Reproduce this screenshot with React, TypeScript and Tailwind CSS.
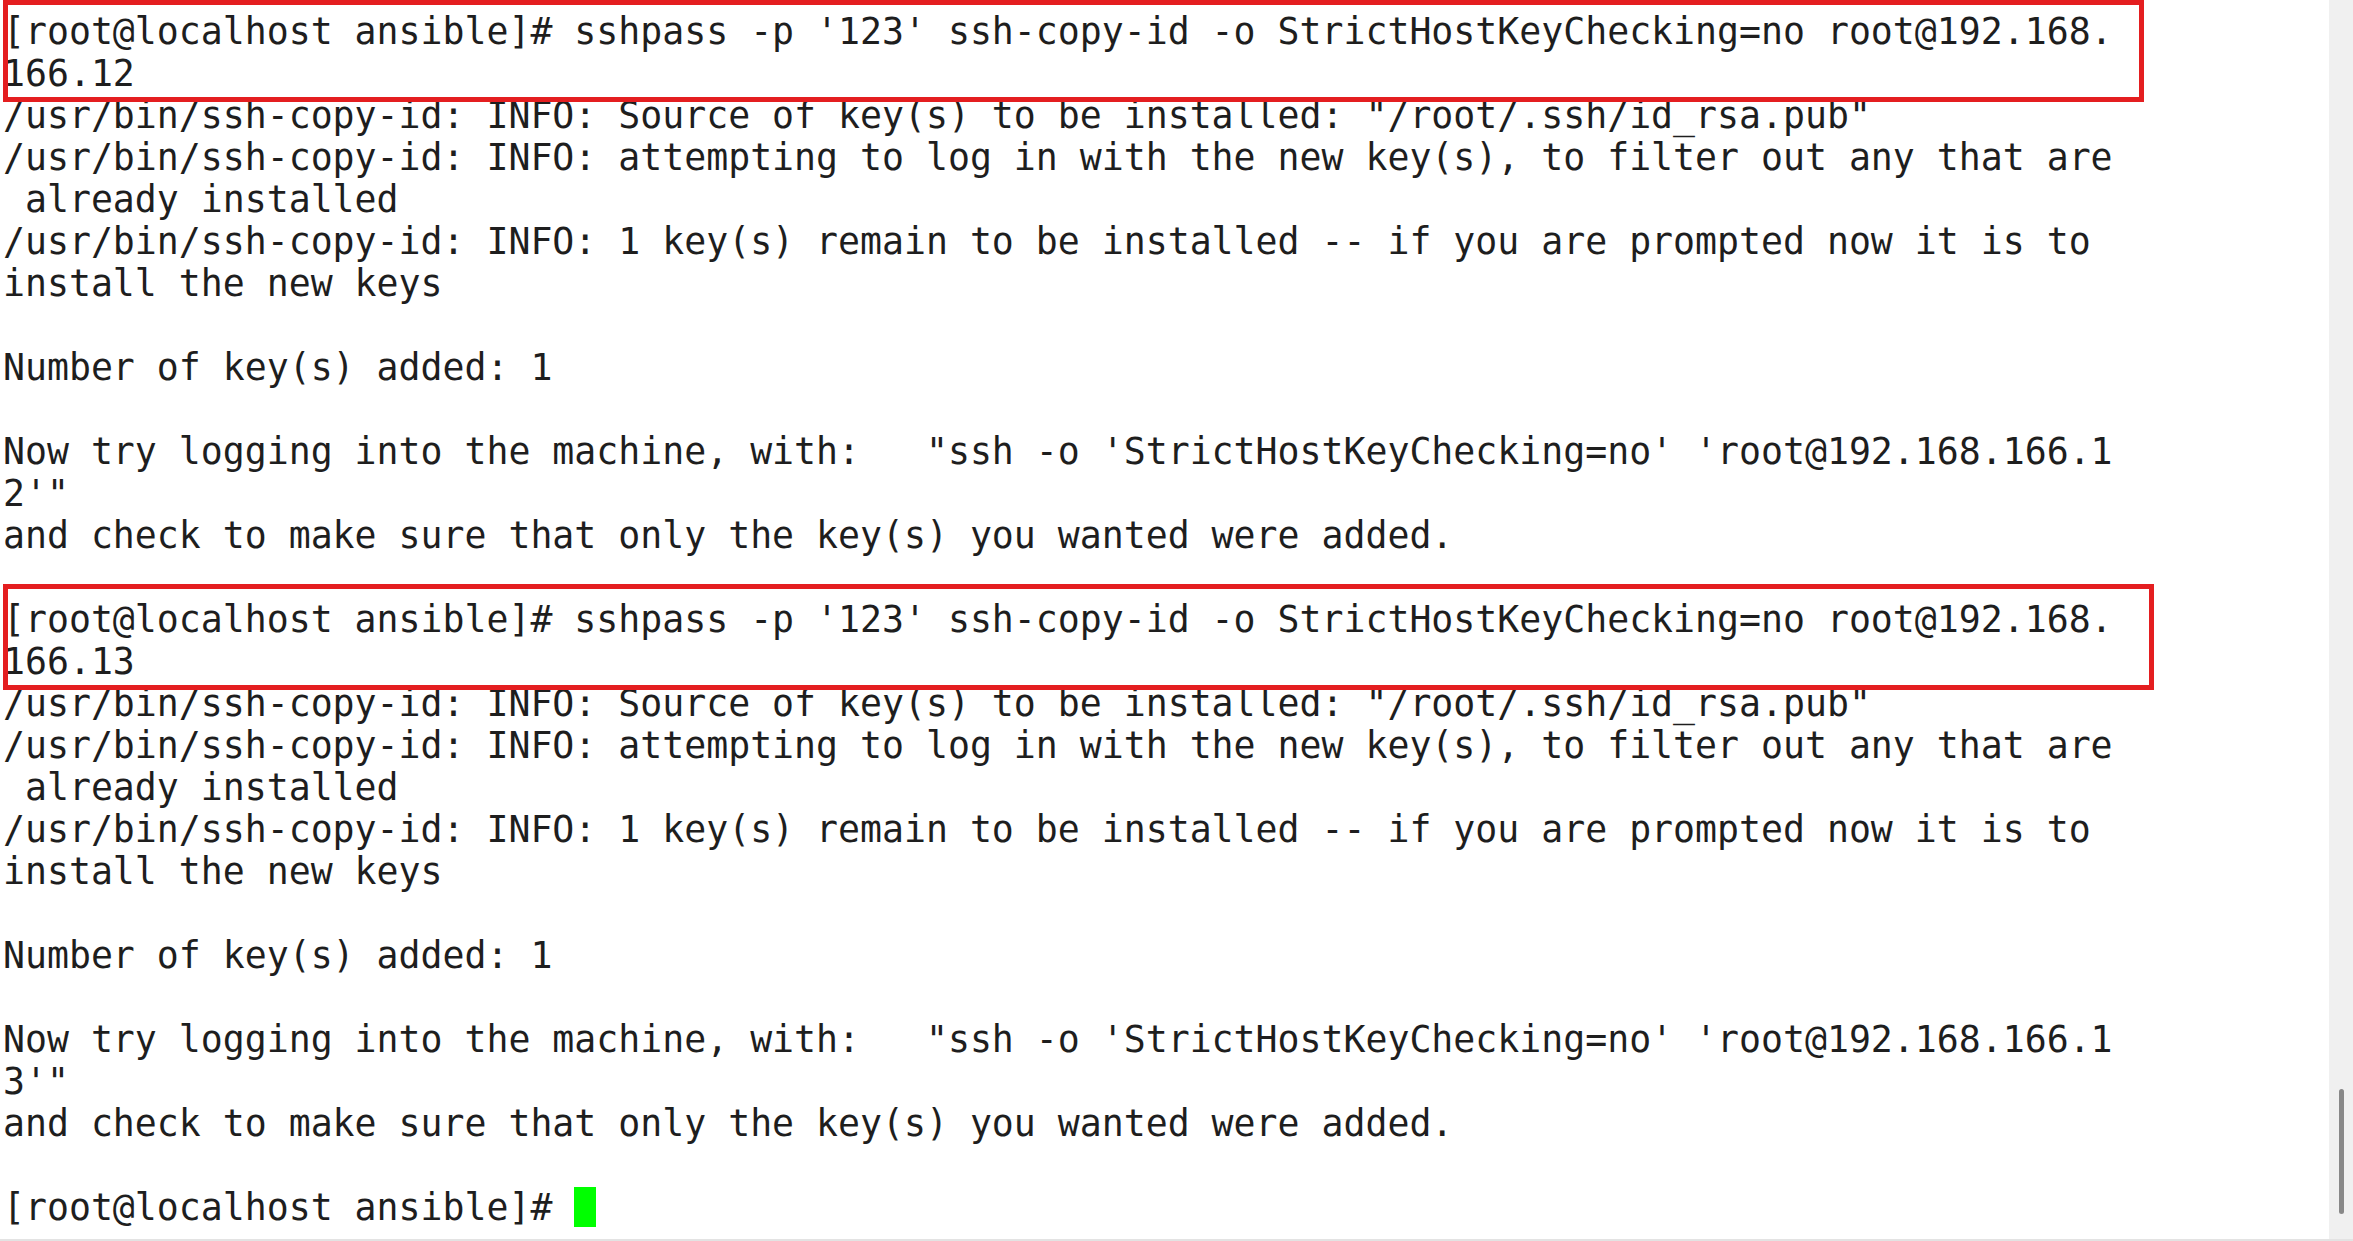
const cmd =
  "[root@localhost ansible]# sshpass -p '123' ssh-copy-id -o StrictHostKeyChecking=no root@192.168.";

function session(host: string): string[] {
  return [
    cmd,
    `166.${host}`,
    '/usr/bin/ssh-copy-id: INFO: Source of key(s) to be installed: "/root/.ssh/id_rsa.pub"',
    "/usr/bin/ssh-copy-id: INFO: attempting to log in with the new key(s), to filter out any that are",
    " already installed",
    "/usr/bin/ssh-copy-id: INFO: 1 key(s) remain to be installed -- if you are prompted now it is to",
    "install the new keys",
    "",
    "Number of key(s) added: 1",
    "",
    `Now try logging into the machine, with:   "ssh -o 'StrictHostKeyChecking=no' 'root@192.168.166.1`,
    `${host.slice(1)}'"`,
    "and check to make sure that only the key(s) you wanted were added.",
    "",
  ];
}

const lines = [...session("12"), ...session("13")];

export default function App() {
  return (
    <div className="w-[2353px] h-[1241px] overflow-hidden bg-white flex flex-col">
      <div className="flex flex-1 min-h-0">
        {/* Terminal output */}
        <div className="relative flex-1 bg-white pt-[11px] pl-[3px] overflow-hidden">
          <pre
            className="m-0 text-[36.5px] leading-[42px] text-[#1e1e1e] whitespace-pre"
            style={{ fontFamily: '"DejaVu Sans Mono", "Liberation Mono", monospace' }}
          >
            {lines.map((l, i) => (
              <div key={i} className="h-[42px]">
                {l}
              </div>
            ))}
            <div className="h-[42px] flex items-start">
              <span>[root@localhost ansible]# </span>
              <span className="inline-block w-[22px] h-[40px] bg-[#00ff00]" />
            </div>
          </pre>

          {/* Annotation boxes */}
          <div className="absolute left-[3px] top-0 w-[2141px] h-[102px] border-[5px] border-[#e41e20]" />
          <div className="absolute left-[3px] top-[584px] w-[2151px] h-[106px] border-[5px] border-[#e41e20]" />
        </div>

        {/* Scrollbar */}
        <div className="w-[24px] bg-[#f0f0f0] flex flex-col justify-end pb-[25px] pl-[10px]">
          <div className="w-[5px] h-[125px] rounded-full bg-[#888888]" />
        </div>
      </div>
      <div className="h-[2px] bg-[#e3e3e3]" />
    </div>
  );
}
